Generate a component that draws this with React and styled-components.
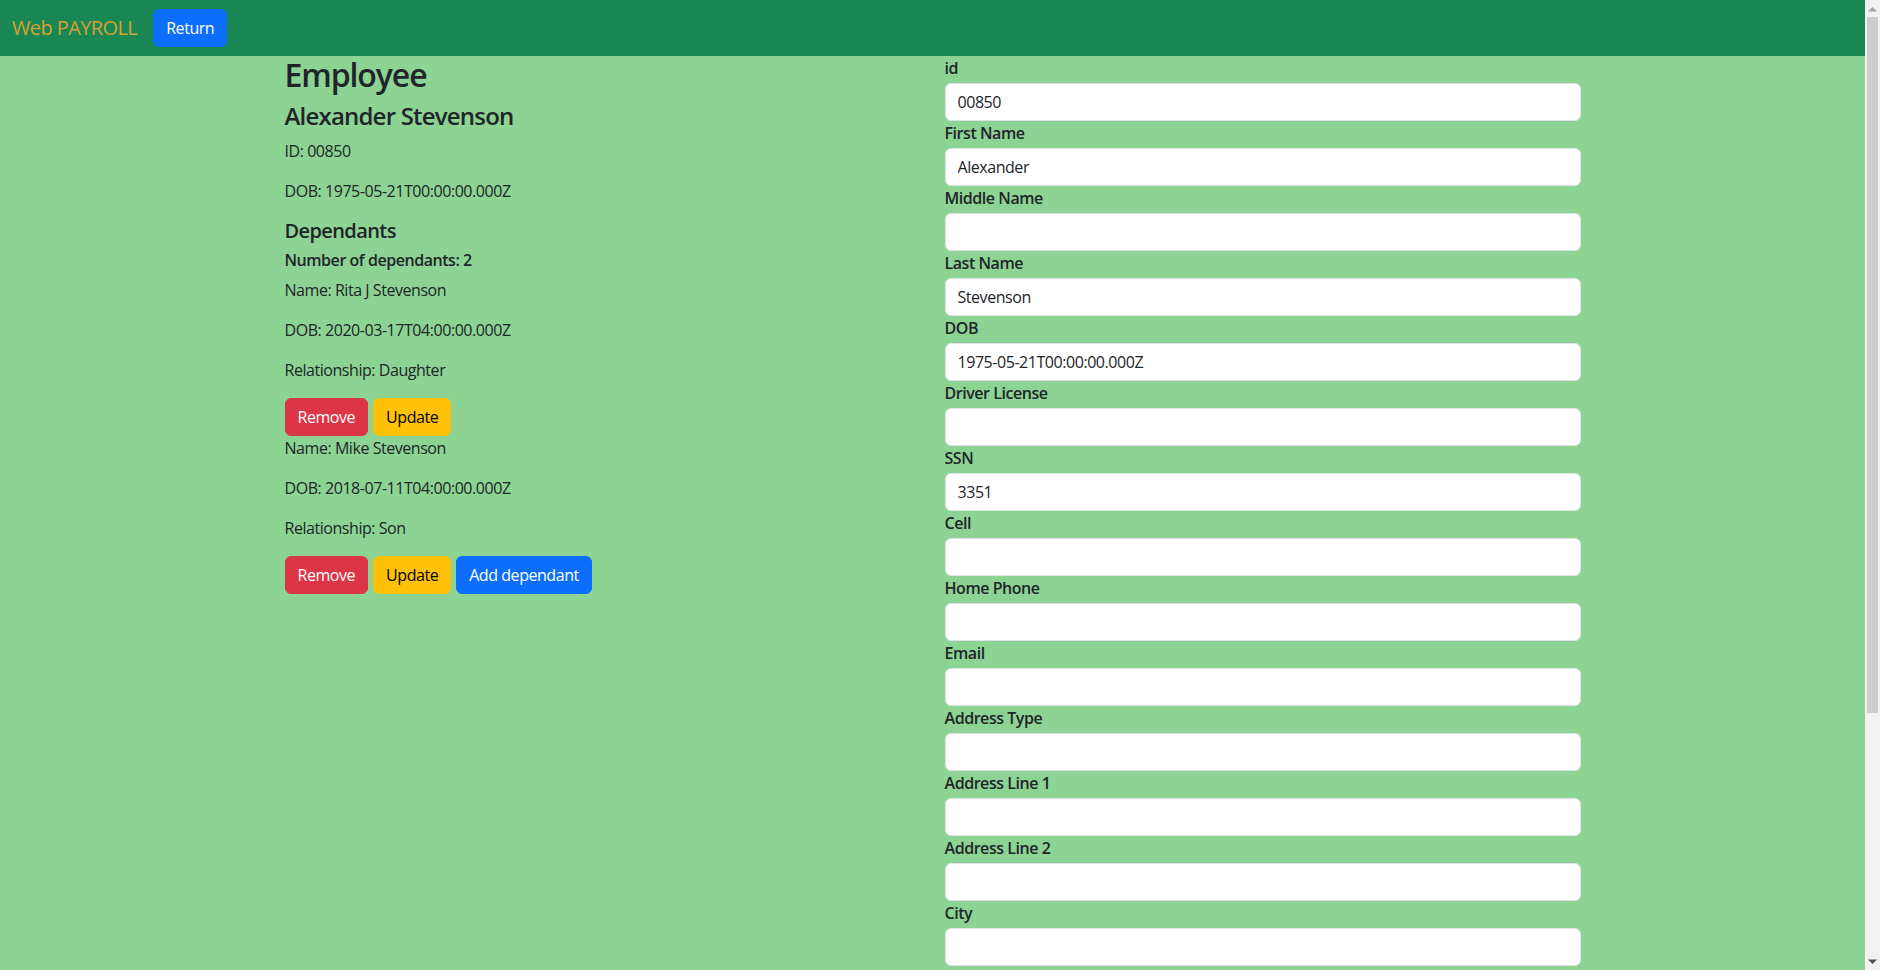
import React from 'react';
import styled, { createGlobalStyle } from 'styled-components';

const GlobalStyle = createGlobalStyle`
  * {
    box-sizing: border-box;
  }
  html {
    background-color: #f1f1f1;
  }
  body {
    margin: 0 15px 0 0;
    min-height: 100vh;
    background-color: #8cd394;
    color: #212529;
    font-family: "Open Sans", "Liberation Sans", Arial, sans-serif;
    font-size: 16px;
    line-height: 1.5;
    letter-spacing: -0.45px;
  }
`;

const employee = {
  id: '00850',
  firstName: 'Alexander',
  lastName: 'Stevenson',
  dob: '1975-05-21T00:00:00.000Z',
  ssn: '3351',
};

const dependants = [
  { name: 'Rita J Stevenson', dob: '2020-03-17T04:00:00.000Z', relationship: 'Daughter' },
  { name: 'Mike Stevenson', dob: '2018-07-11T04:00:00.000Z', relationship: 'Son' },
];

const fields = [
  { label: 'id', value: employee.id },
  { label: 'First Name', value: employee.firstName },
  { label: 'Middle Name', value: '' },
  { label: 'Last Name', value: employee.lastName },
  { label: 'DOB', value: employee.dob },
  { label: 'Driver License', value: '' },
  { label: 'SSN', value: employee.ssn },
  { label: 'Cell', value: '' },
  { label: 'Home Phone', value: '' },
  { label: 'Email', value: '' },
  { label: 'Address Type', value: '' },
  { label: 'Address Line 1', value: '' },
  { label: 'Address Line 2', value: '' },
  { label: 'City', value: '' },
  { label: 'State', value: '' },
  { label: 'Zip', value: '' },
  { label: 'Country', value: '' },
  { label: 'Job Title', value: '' },
  { label: 'Hire Date', value: '' },
];

const App = () => {
  return (
    <>
      <GlobalStyle />
      <NavBar>
        <Brand>Web PAYROLL</Brand>
        <Button variant="primary">Return</Button>
      </NavBar>
      <Container>
        <Column>
          <Title>Employee</Title>
          <Name>{employee.firstName} {employee.lastName}</Name>
          <Text>ID: {employee.id}</Text>
          <Text>DOB: {employee.dob}</Text>
          <SectionTitle>Dependants</SectionTitle>
          <Count>Number of dependants: {dependants.length}</Count>
          {dependants.map((d, i) => (
            <div key={d.name}>
              <Text>Name: {d.name}</Text>
              <Text>DOB: {d.dob}</Text>
              <Text>Relationship: {d.relationship}</Text>
              <ButtonRow>
                <Button variant="danger">Remove</Button>
                <Button variant="warning">Update</Button>
                {i === dependants.length - 1 && <Button variant="primary">Add dependant</Button>}
              </ButtonRow>
            </div>
          ))}
        </Column>
        <Column>
          {fields.map((f) => (
            <Field key={f.label}>
              <Label>{f.label}</Label>
              <Input type="text" defaultValue={f.value} />
            </Field>
          ))}
        </Column>
      </Container>
      <ScrollTrack>
        <ScrollArrow>
          <svg width="9" height="6" viewBox="0 0 9 6"><path d="M0 5.5 L4.5 1 L9 5.5 Z" fill="#a3a3a3" /></svg>
        </ScrollArrow>
        <ScrollThumb />
        <ScrollSpacer />
        <ScrollArrow>
          <svg width="9" height="6" viewBox="0 0 9 6"><path d="M0 0.5 L4.5 5 L9 0.5 Z" fill="#505050" /></svg>
        </ScrollArrow>
      </ScrollTrack>
    </>
  );
};

const NavBar = styled.nav`
  display: flex;
  align-items: center;
  height: 56px;
  padding: 8px 12px;
  background-color: #198754;
`;

const Brand = styled.span`
  margin-right: 16px;
  padding: 5px 0;
  font-size: 20px;
  line-height: 30px;
  color: #d4a331;
  letter-spacing: -0.6px;
`;

const variants = {
  primary: { bg: '#0d6efd', color: '#fff' },
  danger: { bg: '#dc3545', color: '#fff' },
  warning: { bg: '#ffc107', color: '#000' },
};

const Button = styled.button`
  display: inline-block;
  height: 38px;
  padding: 6px 12px;
  border: 1px solid ${(p) => variants[p.variant].bg};
  border-radius: 6px;
  background-color: ${(p) => variants[p.variant].bg};
  color: ${(p) => variants[p.variant].color};
  font-family: inherit;
  font-size: 16px;
  line-height: 1.5;
  letter-spacing: inherit;
  cursor: pointer;
`;

const Container = styled.div`
  display: grid;
  grid-template-columns: 1fr 1fr;
  width: 1320px;
  margin: 0 auto;
`;

const Column = styled.div`
  padding: 0 12px;
`;

const Title = styled.h2`
  margin: 0 0 8px;
  font-size: 32px;
  font-weight: 600;
  line-height: 1.2;
  letter-spacing: -1.1px;
`;

const Name = styled.h4`
  margin: 0 0 8px;
  font-size: 24px;
  font-weight: 600;
  line-height: 1.2;
  letter-spacing: -0.8px;
`;

const SectionTitle = styled.h5`
  margin: 0 0 8px;
  font-size: 20px;
  font-weight: 600;
  line-height: 1.2;
  letter-spacing: -0.6px;
`;

const Count = styled.h6`
  margin: 0 0 8px;
  font-size: 16px;
  font-weight: 600;
  line-height: 1.2;
`;

const Text = styled.p`
  margin: 0 0 16px;
`;

const ButtonRow = styled.div`
  display: flex;
  gap: 5px;
`;

const Field = styled.div`
  display: flex;
  flex-direction: column;
`;

const Label = styled.label`
  margin-bottom: 3px;
  font-weight: 600;
`;

const Input = styled.input`
  display: block;
  width: 100%;
  height: 38px;
  padding: 6px 12px;
  border: 1px solid #dee2e6;
  border-radius: 6px;
  background-color: #fff;
  color: #212529;
  font-family: inherit;
  font-size: 16px;
  line-height: 1.5;
  letter-spacing: inherit;
  outline: none;
`;

const ScrollTrack = styled.div`
  position: fixed;
  top: 0;
  right: 0;
  bottom: 0;
  width: 15px;
  display: flex;
  flex-direction: column;
  background-color: #f1f1f1;
`;

const ScrollArrow = styled.div`
  display: flex;
  align-items: center;
  justify-content: center;
  height: 17px;
  flex-shrink: 0;
`;

const ScrollThumb = styled.div`
  height: 696px;
  margin: 0 2px;
  background-color: #cdcdcd;
  flex-shrink: 0;
`;

const ScrollSpacer = styled.div`
  flex: 1;
`;

export default App;
